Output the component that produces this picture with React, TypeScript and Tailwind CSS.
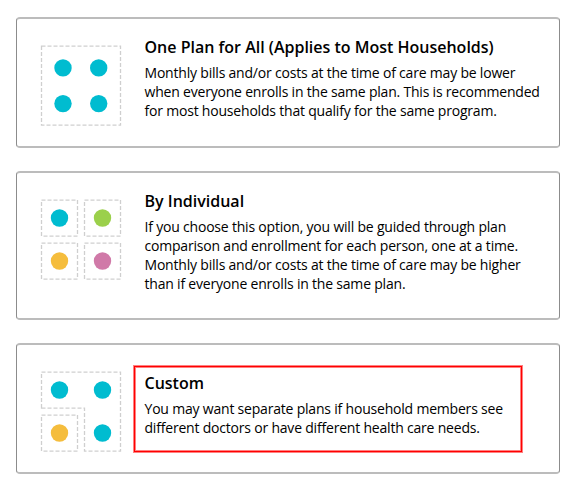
import React from 'react';

/* ================= TYPES ================= */

interface PlanOption {
  id: string;
  title: string;
  lines: string[];
  cardClass: string;
  textClass?: string;
  highlighted?: boolean;
}

/* ================= DATA ================= */

const options: PlanOption[] = [
  {
    id: 'all',
    title: 'One Plan for All (Applies to Most Households)',
    lines: [
      'Monthly bills and/or costs at the time of care may be lower',
      'when everyone enrolls in the same plan. This is recommended',
      'for most households that qualify for the same program.',
    ],
    cardClass: 'h-[131px]',
  },
  {
    id: 'individual',
    title: 'By Individual',
    lines: [
      'If you choose this option, you will be guided through plan',
      'comparison and enrollment for each person, one at a time.',
      'Monthly bills and/or costs at the time of care may be higher',
      'than if everyone enrolls in the same plan.',
    ],
    cardClass: 'h-[149px]',
  },
  {
    id: 'custom',
    title: 'Custom',
    lines: [
      'You may want separate plans if household members see',
      'different doctors or have different health care needs.',
    ],
    cardClass: 'h-[131px]',
    textClass: 'pt-[10px]',
    highlighted: true,
  },
];

const TEAL = '#00bcd0';
const GREEN = '#9bd04b';
const YELLOW = '#f5bd3d';
const PINK = '#d079a8';

/* ================= ICONS ================= */

const dash = { fill: 'none', stroke: '#cfcfcf', strokeWidth: 1.3, strokeDasharray: '4 2' };

const PlanIcon: React.FC<{ id: string }> = ({ id }) => (
  <svg width="82" height="83" viewBox="0 -0.6 82 83" className="block">
    {id === 'all' && (
      <>
        <rect x="1.5" y="1.5" width="79" height="79" {...dash} />
        <circle cx="23" cy="23.3" r="8.7" fill={TEAL} />
        <circle cx="58.7" cy="23.3" r="8.7" fill={TEAL} />
        <circle cx="23" cy="59" r="8.7" fill={TEAL} />
        <circle cx="58.7" cy="59" r="8.7" fill={TEAL} />
      </>
    )}
    {id === 'individual' && (
      <>
        <rect x="1.5" y="1.5" width="36" height="36" {...dash} />
        <rect x="44.5" y="1.5" width="36" height="36" {...dash} />
        <rect x="1.5" y="44.5" width="36" height="36" {...dash} />
        <rect x="44.5" y="44.5" width="36" height="36" {...dash} />
        <circle cx="19.5" cy="19.4" r="8.7" fill={TEAL} />
        <circle cx="62.5" cy="19.4" r="8.7" fill={GREEN} />
        <circle cx="19.5" cy="62.4" r="8.7" fill={YELLOW} />
        <circle cx="62.5" cy="62.4" r="8.7" fill={PINK} />
      </>
    )}
    {id === 'custom' && (
      <>
        <path d="M1.5 37.5V1.5H80.5V80.5H44.5V37.5Z" {...dash} />
        <rect x="1.5" y="44.5" width="36" height="36" {...dash} />
        <circle cx="19.5" cy="19.4" r="8.7" fill={TEAL} />
        <circle cx="62.5" cy="19.4" r="8.7" fill={TEAL} />
        <circle cx="19.5" cy="62.4" r="8.7" fill={YELLOW} />
        <circle cx="62.5" cy="62.4" r="8.7" fill={TEAL} />
      </>
    )}
  </svg>
);

/* ================= COMPONENT ================= */

const App: React.FC = () => {
  return (
    <div className="h-[496px] w-[572px] bg-white pt-[17px] pl-4 font-['Open_Sans',sans-serif] text-black">
      <div className="flex w-[544px] flex-col gap-[23px]">
        {options.map((option) => (
          <div
            key={option.id}
            className={`relative flex items-start rounded-[4px] border-x border-y-2 border-x-[#8c8c8c] border-y-[#bcbcbc] pt-4 pl-[23px] ${option.cardClass}`}
          >
            <div className="mt-[9px] w-[104.5px] shrink-0">
              <PlanIcon id={option.id} />
            </div>
            <div className={option.textClass}>
              <h3 className="text-base leading-6 font-semibold">{option.title}</h3>
              <p className="mt-1 text-sm leading-[19px] tracking-[-0.2px] whitespace-nowrap">
                {option.lines.map((line) => (
                  <span key={line} className="block">
                    {line}
                  </span>
                ))}
              </p>
            </div>
            {/* Red outline around the option text */}
            {option.highlighted && (
              <div className="absolute top-[21px] left-[117px] h-[86px] w-[388px] border border-[#ff0000] shadow-[0_0_0_1px_#ff8080,inset_0_0_0_1px_#ff8080]" />
            )}
          </div>
        ))}
      </div>
    </div>
  );
};

export default App;
